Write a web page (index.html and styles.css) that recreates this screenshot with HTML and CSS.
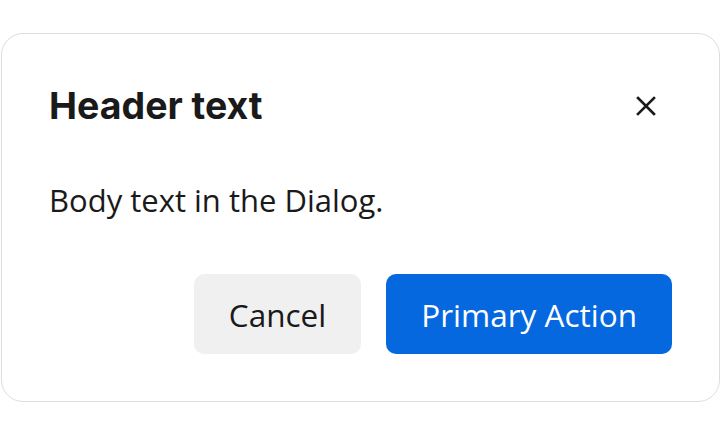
FILE: index.html
```html
<!DOCTYPE html>
<html>
<head>
  <meta charset="UTF-8">
  <title>Dialog</title>
  <link rel="stylesheet" href="styles.css">
</head>
<body>
  <div class="dialog" role="dialog" aria-labelledby="dialog-title">
    <div class="dialog-header">
      <h2 id="dialog-title">Header text</h2>
      <button class="close-btn" aria-label="Close">
        <svg width="20" height="20" viewBox="0 0 20 20">
          <path d="M2 2 L18 18 M18 2 L2 18" stroke="#1a1a1a" stroke-width="2.6" stroke-linecap="square" fill="none"/>
        </svg>
      </button>
    </div>

    <p class="dialog-body">Body text in the Dialog.</p>

    <div class="dialog-actions">
      <button class="btn btn-secondary">Cancel</button>
      <button class="btn btn-primary">Primary Action</button>
    </div>
  </div>
</body>
</html>
```

FILE: styles.css
```css
:root {
  --text-dark: #1a1a1a;
  --primary-blue: #0568df;
  --grey-bg: #f0f0f0;
  --border-grey: #dddddd;
}

body {
  margin: 0;
  padding: 33px 0 0 1px;
  font-family: 'Open Sans', 'Noto Sans', sans-serif;
  color: var(--text-dark);
  background: #fff;
}

.dialog {
  box-sizing: border-box;
  width: 719px;
  height: 369px;
  padding: 48px 47px 47px 47px;
  border: 1.5px solid var(--border-grey);
  border-radius: 22px;
  display: flex;
  flex-direction: column;
}

/* Header row */
.dialog-header {
  display: flex;
  align-items: center;
  justify-content: space-between;
}

.dialog-header h2 {
  margin: 0;
  font-family: 'Inter', 'Lato', sans-serif;
  font-size: 37.5px;
  font-weight: bold;
  line-height: 48px;
}

.close-btn {
  background: none;
  border: none;
  padding: 0;
  margin-right: 16px;
  width: 20px;
  height: 20px;
  cursor: pointer;
}

.close-btn svg {
  display: block;
}

.dialog-body {
  margin: 50px 0 0 0;
  font-size: 31px;
  line-height: 40px;
}

/* Buttons */
.dialog-actions {
  display: flex;
  justify-content: flex-end;
  gap: 25px;
  margin-top: 54px;
}

.btn {
  height: 80px;
  padding: 0 35px;
  border: none;
  border-radius: 10px;
  font-family: inherit;
  font-size: 31.5px;
  cursor: pointer;
}

.btn-secondary {
  background: var(--grey-bg);
  color: var(--text-dark);
}

.btn-primary {
  background: var(--primary-blue);
  color: #fff;
}
```
